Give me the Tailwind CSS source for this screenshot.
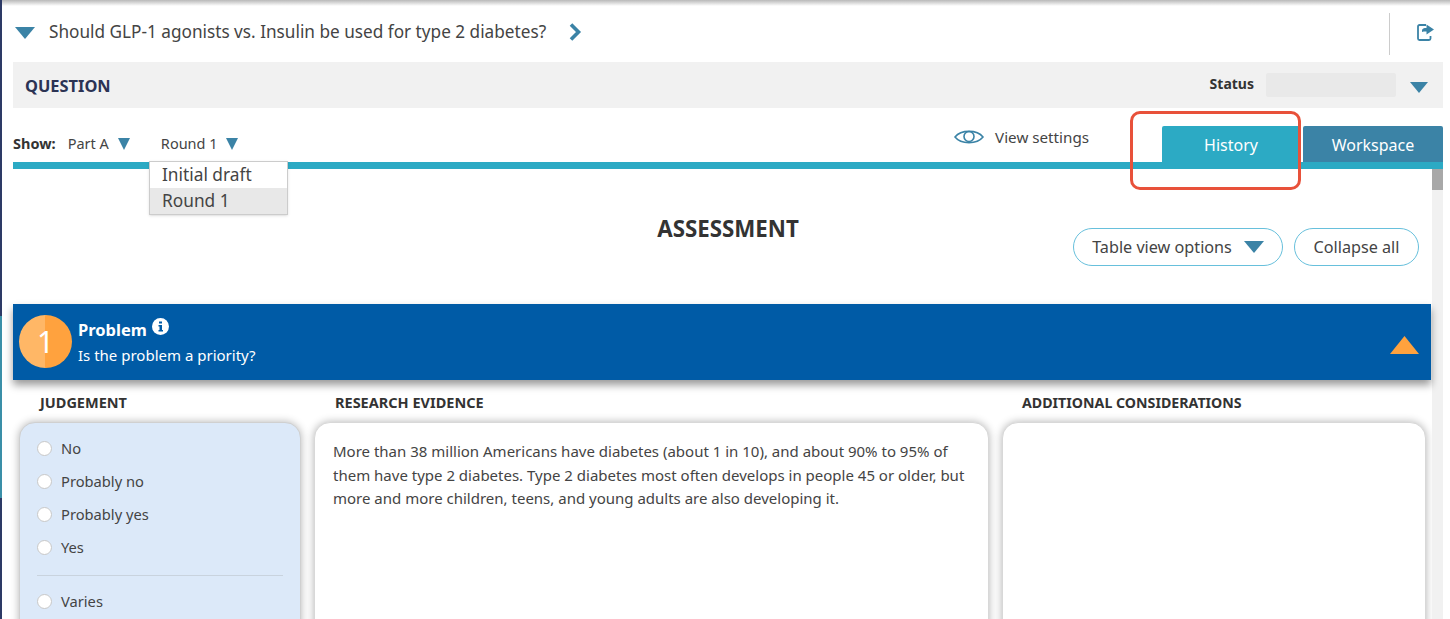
<!DOCTYPE html>
<html lang="en">
<head>
    <meta charset="UTF-8"/>
    <script src="https://cdn.jsdelivr.net/npm/@tailwindcss/browser@4"></script>
    <title>Assessment</title>
</head>
<body class="bg-white">
<main class="relative h-[619px] w-[1450px] overflow-hidden pl-[2px] font-['Noto_Sans',sans-serif] text-[#444]">
    <!-- window edge on the left of the screenshot -->
    <div class="absolute left-0 top-0 h-full w-[2px] bg-[#2d3a66]">
        <div class="mt-[316px] h-[182px] bg-[#3a8fa8]"></div>
    </div>
    <div class="h-[6px] bg-gradient-to-b from-[#b9b9b9] to-white"></div>

    <!-- question title -->
    <header class="ml-[11px] mr-[7px] flex h-[56px] items-center pb-[5px]">
        <svg class="ml-[2px] mr-[14px] mt-[2px]" width="20" height="12" viewBox="0 0 20 12"><path d="M0 0H20L10 12Z" fill="#3b83a6"/></svg>
        <h1 class="text-[17.200px] text-[#444]">Should GLP-1 agonists vs. Insulin be used for type 2 diabetes?</h1>
        <svg class="ml-[22px]" width="14" height="18" viewBox="0 0 14 18"><path d="M3 1.500L10.500 9L3 16.500" fill="none" stroke="#3b83a6" stroke-width="3.600"/></svg>
        <div class="ml-auto mt-[5px] flex h-[42px] w-[54px] items-center justify-end border-l border-[#ccc] pb-[5px] pr-[8px]">
            <svg width="18" height="20" viewBox="0 0 18 20"><path d="M9 3H2.500A1.500 1.500 0 0 0 1 4.500V16.500A1.500 1.500 0 0 0 2.500 18H12A1.500 1.500 0 0 0 13.500 16.500V14" fill="none" stroke="#3b83a6" stroke-width="1.800"/><path d="M5 10V8.500C5 6.500 7 6 9.500 6V2.500L17 7.500L9.500 12.500V9.500C7.500 9.500 6 9.500 5 10Z" fill="#3b83a6"/></svg>
        </div>
    </header>

    <!-- question bar -->
    <section class="ml-[11px] mr-[7px] flex h-[46px] items-center bg-[#f1f1f1] pl-[12px] pr-[15px]">
        <h2 class="mt-[2px] text-[16.400px] font-bold text-[#2b3354]">QUESTION</h2>
        <span class="ml-auto mb-[3px] text-[14px] font-bold text-[#333]">Status</span>
        <div class="ml-[12px] h-[24px] w-[130px] rounded-[2px] bg-[#e9e9e9]"></div>
        <svg class="ml-[14px] mt-[4px]" width="18" height="11" viewBox="0 0 18 11"><path d="M0 0H18L9 11Z" fill="#3b83a6"/></svg>
    </section>

    <!-- toolbar and tabs -->
    <nav class="relative ml-[11px] mr-[7px] flex h-[61px] items-start border-b-[7px] border-[#2caac4]">
        <div class="mt-[25px] flex items-center text-[14.500px]">
            <span class="font-bold text-[#333]">Show:</span>
            <span class="ml-[12px]">Part A</span>
            <svg class="ml-[9px]" width="12" height="12" viewBox="0 0 12 12"><path d="M0 0H12L6 12Z" fill="#3b83a6"/></svg>
            <span class="ml-[31px]">Round 1</span>
            <svg class="ml-[8px]" width="12" height="12" viewBox="0 0 12 12"><path d="M0 0H12L6 12Z" fill="#3b83a6"/></svg>
        </div>
        <div class="ml-auto mt-[18px] mr-[73px] flex items-center text-[15.200px]">
            <svg class="mr-[11px]" width="30" height="18" viewBox="0 0 30 18"><path d="M1 9C7 1.500 23 1.500 29 9C23 16.500 7 16.500 1 9Z" fill="none" stroke="#3b83a6" stroke-width="1.600"/><circle cx="15" cy="8.500" r="5" fill="none" stroke="#3b83a6" stroke-width="1.600"/></svg>
            <span>View settings</span>
        </div>
        <div class="mt-[18px] flex h-[43px] w-[138px] items-center justify-center rounded-t-[2px] bg-[#2caac4] pb-[5px] text-[16px] text-white">History</div>
        <div class="ml-[3px] mt-[18px] flex h-[36px] w-[140px] items-center justify-center rounded-t-[2px] bg-[#3b83a6] pt-[1px] text-[16px] text-white">Workspace</div>

        <!-- round menu -->
        <ul class="absolute left-[136px] top-[53px] z-10 w-[139px] border border-[#ccc] bg-white text-[17.300px] leading-[26px] shadow-sm">
            <li class="pl-[12px] pb-[1px] leading-[25px]">Initial draft</li>
            <li class="bg-[#e8e8e8] pl-[12px] pb-[1px] leading-[25px]">Round 1</li>
        </ul>
    </nav>

    <!-- scrolling content -->
    <div class="relative ml-[11px] mr-[7px] h-[450px] pr-[12px]">
        <div class="absolute right-0 top-0 h-full w-[11px] bg-[#f1f1f1]">
            <div class="h-[21px] bg-[#a8a8a8]"></div>
        </div>

        <div class="relative h-[135px]">
            <h2 class="absolute left-0 right-0 top-[45px] pl-[12px] text-center text-[22.300px] font-bold leading-[30px] text-[#333]">ASSESSMENT</h2>
            <div class="absolute right-[12px] top-[59px] flex gap-[11px] text-[16.200px]">
                <button class="flex h-[38px] w-[210px] items-center justify-center rounded-full border border-[#67c0dc]">Table view options
                    <svg class="ml-[12px]" width="20" height="12" viewBox="0 0 20 12"><path d="M0 0H20L10 12Z" fill="#3b83a6"/></svg>
                </button>
                <button class="h-[38px] w-[125px] rounded-full border border-[#67c0dc]">Collapse all</button>
            </div>
        </div>

        <!-- problem banner -->
        <div class="relative z-[1] flex h-[76px] items-center bg-[#005ba6] pl-[6px] pr-[12px] text-white shadow-[0_5px_8px_rgba(0,0,0,0.4)]">
            <div class="mb-[2px] flex h-[53px] w-[53px] items-center justify-center rounded-full bg-[linear-gradient(90deg,#ffb766_50%,#ffa23e_50%)] text-[30px]">1</div>
            <div class="ml-[6px]">
                <div class="mt-[1px] flex items-start text-[16.500px] font-bold leading-[24px]">Problem
                    <svg class="ml-[5px]" width="17" height="17" viewBox="0 0 17 17"><circle cx="8.500" cy="8.500" r="8.500" fill="#fff"/><path d="M7 3.500H10V5.500H7ZM6.500 7H10V12H11V13.500H6.500V12H7.500V8.500H6.500Z" fill="#005ba6"/></svg>
                </div>
                <p class="mt-[1px] text-[15px] leading-[24px]">Is the problem a priority?</p>
            </div>
            <svg class="ml-auto mt-[6px]" width="29" height="18" viewBox="0 0 29 18"><path d="M14.500 0L29 18H0Z" fill="#ffa23e"/></svg>
        </div>

        <!-- assessment columns -->
        <div class="grid grid-cols-[282px_675px_424px] gap-x-[13px] pl-[6px] pt-[13px]">
            <h3 class="-mt-[1px] pl-[21px] text-[14.500px] font-bold leading-[20px] text-[#333]">JUDGEMENT</h3>
            <h3 class="-mt-[1px] pl-[21px] text-[14.500px] font-bold leading-[20px] text-[#333]">RESEARCH EVIDENCE</h3>
            <h3 class="pl-[20px] text-[14.200px] font-bold leading-[20px] text-[#333]">ADDITIONAL CONSIDERATIONS</h3>

            <div class="mt-[9px] h-[260px] rounded-t-[16px] border border-[#d0d0d0] bg-[#dce9f9] px-[17px] pt-[9px] shadow-[0_0_8px_rgba(0,0,0,0.3)]">
                <label class="flex h-[33px] items-center text-[14.700px]"><span class="mr-[9px] h-[15px] w-[15px] rounded-full border border-[#c8c8c8] bg-white"></span>No</label>
                <label class="flex h-[33px] items-center text-[14.700px]"><span class="mr-[9px] h-[15px] w-[15px] rounded-full border border-[#c8c8c8] bg-white"></span>Probably no</label>
                <label class="flex h-[33px] items-center text-[14.700px]"><span class="mr-[9px] h-[15px] w-[15px] rounded-full border border-[#c8c8c8] bg-white"></span>Probably yes</label>
                <label class="flex h-[33px] items-center text-[14.700px]"><span class="mr-[9px] h-[15px] w-[15px] rounded-full border border-[#c8c8c8] bg-white"></span>Yes</label>
                <div class="mb-[9px] mt-[11px] h-px bg-[#c9d3de]"></div>
                <label class="flex h-[33px] items-center text-[14.700px]"><span class="mr-[9px] h-[15px] w-[15px] rounded-full border border-[#c8c8c8] bg-white"></span>Varies</label>
            </div>
            <div class="mt-[9px] h-[260px] rounded-t-[16px] border border-[#d8d8d8] bg-white px-[18px] pt-[17px] text-[15px] leading-[23.500px] shadow-[0_0_8px_rgba(0,0,0,0.3)]">
                More than 38 million Americans have diabetes (about 1 in 10), and about 90% to 95% of them have type 2 diabetes. Type 2 diabetes most often develops in people 45 or older, but more and more children, teens, and young adults are also developing it.
            </div>
            <div class="mt-[9px] h-[260px] rounded-t-[16px] border border-[#d8d8d8] bg-white shadow-[0_0_8px_rgba(0,0,0,0.3)]"></div>
        </div>
    </div>

    <!-- annotation drawn over the screenshot -->
    <div class="absolute left-[1130px] top-[111px] z-20 h-[79px] w-[171px] rounded-[10px] border-[3px] border-[#e8513a]"></div>
</main>
</body>
</html>
